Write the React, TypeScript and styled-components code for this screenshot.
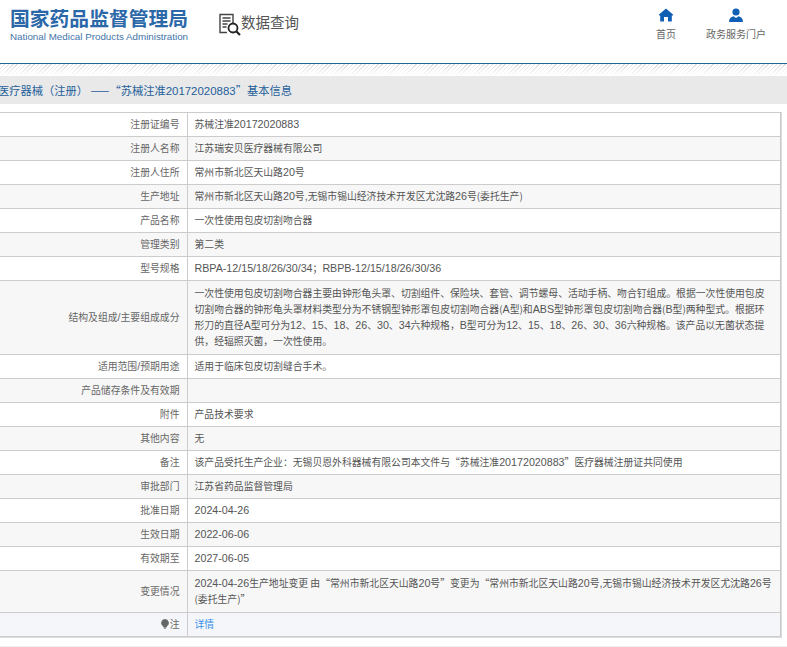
import styled, { createGlobalStyle } from "styled-components";

const rows: { label: string; value: string; link?: boolean; tip?: boolean; multi?: boolean }[] = [
  { label: "注册证编号", value: "苏械注准20172020883" },
  { label: "注册人名称", value: "江苏瑞安贝医疗器械有限公司" },
  { label: "注册人住所", value: "常州市新北区天山路20号" },
  { label: "生产地址", value: "常州市新北区天山路20号,无锡市锡山经济技术开发区尤沈路26号(委托生产)" },
  { label: "产品名称", value: "一次性使用包皮切割吻合器" },
  { label: "管理类别", value: "第二类" },
  { label: "型号规格", value: "RBPA-12/15/18/26/30/34；RBPB-12/15/18/26/30/36" },
  {
    label: "结构及组成/主要组成成分",
    multi: true,
    value:
      "一次性使用包皮切割吻合器主要由钟形龟头罩、切割组件、保险块、套管、调节螺母、活动手柄、吻合钉组成。根据一次性使用包皮切割吻合器的钟形龟头罩材料类型分为不锈钢型钟形罩包皮切割吻合器(A型)和ABS型钟形罩包皮切割吻合器(B型)两种型式。根据环形刀的直径A型可分为12、15、18、26、30、34六种规格，B型可分为12、15、18、26、30、36六种规格。该产品以无菌状态提供，经辐照灭菌，一次性使用。",
  },
  { label: "适用范围/预期用途", value: "适用于临床包皮切割缝合手术。" },
  { label: "产品储存条件及有效期", value: "" },
  { label: "附件", value: "产品技术要求" },
  { label: "其他内容", value: "无" },
  { label: "备注", value: "该产品受托生产企业：无锡贝恩外科器械有限公司本文件与“苏械注准20172020883”医疗器械注册证共同使用" },
  { label: "审批部门", value: "江苏省药品监督管理局" },
  { label: "批准日期", value: "2024-04-26" },
  { label: "生效日期", value: "2022-06-06" },
  { label: "有效期至", value: "2027-06-05" },
  {
    label: "变更情况",
    multi: true,
    value: "2024-04-26生产地址变更 由“常州市新北区天山路20号”变更为“常州市新北区天山路20号,无锡市锡山经济技术开发区尤沈路26号(委托生产)”",
  },
  { label: "注", value: "详情", link: true, tip: true },
];

// latin runs are a touch larger than the chinese around them, parens stay small
const withLatin = (text: string) =>
  text.split(/([A-Za-z0-9\-/,]+)/).map((part, i) => (i % 2 === 1 ? <Latin key={i}>{part}</Latin> : part));

export default function App() {
  return (
    <>
      <GlobalStyle />
      <Header>
        <Brand>
          <BrandName>国家药品监督管理局</BrandName>
          <BrandEn>National Medical Products Administration</BrandEn>
        </Brand>
        <QueryTitle>
          <svg width="22" height="24" viewBox="0 0 22 24" fill="none">
            <path d="M14 10V1.500H1v18h7" stroke="#444" strokeWidth="1.400" />
            <path d="M3.500 5h8M3.500 8h8M3.500 11h5M3.500 14h4" stroke="#444" strokeWidth="1.300" />
            <circle cx="14" cy="15" r="4.500" stroke="#222" strokeWidth="1.800" />
            <path d="M17.500 18.500l3.500 3.500" stroke="#222" strokeWidth="2.200" />
          </svg>
          <span>数据查询</span>
        </QueryTitle>
        <Nav>
          <NavItem>
            <svg width="14" height="14" viewBox="0 0 14 14">
              <path d="M7 .5L0 6.500v1h1.200V13.500h3.800V9h4v4.500h3.800V7.500H14v-1z" fill="#0f5fb5" />
            </svg>
            <span>首页</span>
          </NavItem>
          <NavItem>
            <svg width="14" height="14" viewBox="0 0 14 14">
              <circle cx="7" cy="4" r="3.600" fill="#0f5fb5" />
              <path d="M0 14c0-3.500 2-5.300 4.500-5.800L7 10l2.500-1.800C12 8.700 14 10.500 14 14z" fill="#0f5fb5" />
            </svg>
            <span>政务服务门户</span>
          </NavItem>
        </Nav>
      </Header>
      <Stripe />
      <Crumb>
        <CrumbText>
          医疗器械（注册） ——<WideQuote>“</WideQuote>苏械注准<CrumbDigits>20172020883</CrumbDigits>
          <WideQuote>”</WideQuote>基本信息
        </CrumbText>
      </Crumb>
      <TableBox>
        <Table>
          <tbody>
            {rows.map((row, i) => (
              <Row key={row.label} $odd={i % 2 === 1} $tip={row.tip}>
                <Label>
                  {row.tip && (
                    <svg width="8" height="10" viewBox="0 0 9 11">
                      <path d="M4.500 0a4.300 4.300 0 0 0-2.500 7.800L3 9.500h3l1-1.700A4.300 4.300 0 0 0 4.500 0z" fill="#666" />
                      <path d="M3.200 10.200h2.600" stroke="#666" />
                    </svg>
                  )}
                  {withLatin(row.label)}
                </Label>
                <Value $multi={row.multi}>
                  {row.link ? <DetailLink href="#">{row.value}</DetailLink> : withLatin(row.value)}
                </Value>
              </Row>
            ))}
          </tbody>
        </Table>
      </TableBox>
      <Footer />
    </>
  );
}

const GlobalStyle = createGlobalStyle`
  html, body {
    margin: 0;
    background: #fff;
    overflow: hidden;
    font-family: "Noto Sans CJK SC", "Liberation Sans", sans-serif;
  }
`;

const Latin = styled.span`
  font-family: "Liberation Sans", sans-serif;
  font-size: 10.700px;
  line-height: 0;
`;

const Header = styled.header`
  height: 63px;
  display: flex;
  align-items: flex-start;
  border-bottom: 1px solid #1c6a94;
`;

const Brand = styled.div`
  width: 219px;
  padding: 7px 0 0 10px;
  box-sizing: border-box;
`;

const BrandName = styled.div`
  font-size: 19.800px;
  line-height: 22px;
  font-weight: 700;
  color: #2b68a8;
  white-space: nowrap;
`;

const BrandEn = styled.div`
  font-family: "Liberation Sans", sans-serif;
  font-size: 9.800px;
  line-height: 12px;
  margin-top: 2px;
  color: #3f74a8;
  white-space: nowrap;
`;

const QueryTitle = styled.div`
  display: flex;
  align-items: flex-start;
  margin-top: 13px;
  font-size: 14.500px;
  line-height: 18px;
  color: #555;
`;

const Nav = styled.nav`
  margin-left: auto;
  display: flex;
  gap: 30px;
  padding: 8px 21px 0 0;
`;

const NavItem = styled.a`
  display: flex;
  flex-direction: column;
  align-items: center;
  gap: 5px;
  font-size: 10px;
  line-height: 14px;
  color: #666;
`;

const Stripe = styled.div`
  height: 12px;
  background:
    linear-gradient(to bottom, rgba(255, 255, 255, 0), #fff),
    repeating-linear-gradient(135deg, #ddd 0 1px, #fff 1px 3px);
`;

const Crumb = styled.div`
  height: 28px;
  margin-bottom: 8px;
  background: #e9e9ea;
  overflow: hidden;
`;

const CrumbText = styled.div`
  margin-left: -2px;
  font-size: 11.250px;
  line-height: 28px;
  color: #1f5f99;
  white-space: nowrap;
  text-spacing-trim: space-all;
`;

const WideQuote = styled.span`
  font-feature-settings: "fwid";
`;

const CrumbDigits = styled(Latin)`
  font-size: 11.450px;
`;

const TableBox = styled.div`
  width: 782px;
  box-sizing: border-box;
  border-right: 1px solid #ddd;
  border-bottom: 1px solid #ddd;
`;

const Table = styled.table`
  width: 781px;
  table-layout: fixed;
  border-collapse: collapse;
  border-right: 1px solid #c8c8c8;
  border-top: 1px solid #ccc;
  border-bottom: 1px solid #ccc;
`;

const Row = styled.tr<{ $odd: boolean; $tip?: boolean }>`
  background: ${({ $odd, $tip }) => ($tip ? "#f4f6fa" : $odd ? "#f7f7f7" : "#fff")};
  border-bottom: 1px solid #ccc;
`;

const Label = styled.td`
  width: 187px;
  box-sizing: border-box;
  padding: 0 7px 0 0;
  text-align: right;
  font-size: 9.830px;
  line-height: 15px;
  color: #666;
  border-right: 1px solid #ccc;
  svg {
    vertical-align: -1px;
    margin-right: 1px;
  }
`;

const Value = styled.td<{ $multi?: boolean }>`
  padding: ${({ $multi }) => ($multi ? "4px 6px 5px 7px" : "3px 6px 4px 7px")};
  font-size: 9.830px;
  line-height: 16px;
  height: 16px;
  color: #555;
`;

const DetailLink = styled.a`
  color: #3a8ee6;
  text-decoration: none;
`;

const Footer = styled.div`
  height: 8px;
  margin-top: 8px;
  background: #f0f0f0;
`;
